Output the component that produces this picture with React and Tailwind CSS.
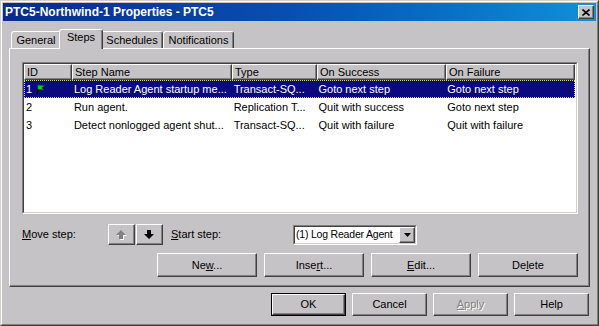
import React from 'react';

/**
 * Job properties dialog – Steps tab
 */
const COLUMNS = [
  { label: 'ID', w: 'w-[48px]' },
  { label: 'Step Name', w: 'w-[160px]' },
  { label: 'Type', w: 'w-[85px]' },
  { label: 'On Success', w: 'w-[129px]' },
  { label: 'On Failure', w: 'w-[129px]' },
];

const STEPS = [
  ['1', 'Log Reader Agent startup me...', 'Transact-SQ...', 'Goto next step', 'Goto next step'],
  ['2', 'Run agent.', 'Replication T...', 'Quit with success', 'Goto next step'],
  ['3', 'Detect nonlogged agent shut...', 'Transact-SQ...', 'Quit with failure', 'Quit with failure'],
];

function Bevel({ children, className = '' }) {
  return (
    <div
      className={`flex items-center justify-center border border-t-white border-l-white border-r-[#404040] border-b-[#404040] shadow-[inset_-1px_-1px_0_#808080] bg-[#c6c3c6] ${className}`}
    >
      {children}
    </div>
  );
}

function Button({ children, w = 'w-[100px]', h = 'h-[24px]', isDefault, disabled }) {
  const label = (
    <span className={disabled ? 'text-[#808080] [text-shadow:1px_1px_0_#fff]' : 'text-black'}>
      {children}
    </span>
  );
  if (isDefault) {
    return (
      <div className={`${w} ${h} border border-black`}>
        <Bevel className="h-full w-full">{label}</Bevel>
      </div>
    );
  }
  return <Bevel className={`${w} ${h}`}>{label}</Bevel>;
}

function Flag() {
  return (
    <svg width="12" height="11" viewBox="0 0 12 11" className="ml-[2px]">
      <path d="M2.5 10.5 L5.5 3" stroke="#000" strokeWidth="1.3" />
      <path d="M3.5 1 L11 1.5 L8 3.5 L9.5 6 L4 5.5 Z" fill="#10d010" stroke="#005000" strokeWidth="0.7" />
    </svg>
  );
}

function Arrow({ up, disabled }) {
  const pts = up ? '5,1 10,6 7,6 7,10 3,10 3,6 0,6' : '5,10 10,5 7,5 7,1 3,1 3,5 0,5';
  return (
    <svg width="11" height="11" viewBox="0 0 11 11">
      {disabled && <polygon points={pts} fill="#fff" transform="translate(1 1)" />}
      <polygon points={pts} fill={disabled ? '#808080' : '#000'} />
    </svg>
  );
}

function Tab({ label, w, selected }) {
  return (
    <div
      className={`flex items-center justify-center rounded-t-[3px] border-t border-l border-t-white border-l-white border-r border-r-[#404040] shadow-[inset_-1px_0_0_#808080] bg-[#c6c3c6] ${w} ${
        selected ? 'relative z-10 -mx-[2px] h-[20px] pb-[4px]' : 'mb-[1px] h-[17px] pt-px'
      }`}
    >
      {label}
    </div>
  );
}

export default function App() {
  return (
    <div className="h-[326px] w-[599px] overflow-hidden text-[11px] leading-none text-black [font-family:'Liberation_Sans',Arial,sans-serif]">
      {/* Window frame */}
      <div className="h-full w-full border border-t-[#d4d0c8] border-l-[#d4d0c8] border-r-[#404040] border-b-[#404040] bg-[#c6c3c6]">
        <div className="flex h-full w-full flex-col border border-t-white border-l-white border-r-[#808080] border-b-[#808080] p-px">
          {/* Title bar */}
          <div className="flex h-[18px] items-center justify-between bg-linear-to-r from-[#0a2a8c] via-[#0850b4] to-[#1290d8] pl-[2px] pr-[2px]">
            <span className="text-[12px] font-bold text-white">PTC5-Northwind-1 Properties - PTC5</span>
            <Bevel className="h-[14px] w-[16px]">
              <svg width="8" height="7" viewBox="0 0 8 7">
                <path d="M0.5 0.5 L7.5 6.5 M7.5 0.5 L0.5 6.5" stroke="#000" strokeWidth="1.6" />
              </svg>
            </Bevel>
          </div>

          {/* Tabs */}
          <div className="mt-[8px] flex h-[20px] items-end px-[8px] -mb-px">
            <Tab label="General" w="w-[50px]" />
            <Tab label="Steps" w="w-[44px]" selected />
            <Tab label="Schedules" w="w-[62px]" />
            <Tab label="Notifications" w="w-[71px]" />
          </div>

          {/* Tab panel */}
          <div className="mx-[6px] h-[239px] border border-t-white border-l-white border-r-[#404040] border-b-[#404040] shadow-[inset_-1px_-1px_0_#808080] pl-[12px] pt-[13px]">
            {/* List view */}
            <div className="h-[152px] w-[556px] border border-t-[#808080] border-l-[#808080] border-r-white border-b-white">
              <div className="h-full w-full border border-t-[#404040] border-l-[#404040] border-r-[#d4d0c8] border-b-[#d4d0c8] bg-white">
                <div className="flex h-[16px]">
                  {COLUMNS.map((c) => (
                    <div
                      key={c.label}
                      className={`${c.w} flex items-center border border-t-white border-l-white border-r-[#404040] border-b-[#404040] shadow-[inset_-1px_-1px_0_#808080] bg-[#c6c3c6] pl-[2px]`}
                    >
                      {c.label}
                    </div>
                  ))}
                </div>
                {STEPS.map((row, i) => (
                  <div
                    key={row[0]}
                    className={`flex h-[18px] w-[551px] items-center ${
                      i === 0 ? 'border border-dotted border-[#e8e800] bg-[#0a0a80] text-white' : 'border border-transparent'
                    }`}
                  >
                    {row.map((cell, j) => (
                      <div
                        key={j}
                        className={`${COLUMNS[j].w} flex items-center overflow-hidden whitespace-nowrap pl-[2px] ${j === 0 ? '-ml-px' : ''}`}
                      >
                        {cell}
                        {j === 0 && i === 0 && <Flag />}
                      </div>
                    ))}
                  </div>
                ))}
              </div>
            </div>

            {/* Move / start step */}
            <div className="mt-[10px] flex h-[21px] items-center">
              <span className="w-[86px]">
                <u>M</u>ove step:
              </span>
              <div className="flex gap-px">
                <Bevel className="h-[21px] w-[27px]">
                  <Arrow up disabled />
                </Bevel>
                <Bevel className="h-[21px] w-[27px]">
                  <Arrow />
                </Bevel>
              </div>
              <span className="ml-[8px] w-[122px]">
                <u>S</u>tart step:
              </span>
              <div className="h-[20px] w-[124px] border border-t-[#808080] border-l-[#808080] border-r-white border-b-white">
                <div className="flex h-full w-full items-center border border-t-[#404040] border-l-[#404040] border-r-[#d4d0c8] border-b-[#d4d0c8] bg-white">
                  <span className="flex-1 overflow-hidden whitespace-nowrap pl-[1px] text-[10.5px] tracking-[-0.2px]">
                    (1) Log Reader Agent
                  </span>
                  <Bevel className="h-full w-[16px] shrink-0">
                    <svg width="7" height="4" viewBox="0 0 7 4">
                      <polygon points="0,0 7,0 3.5,4" fill="#000" />
                    </svg>
                  </Bevel>
                </div>
              </div>
            </div>

            {/* Step actions */}
            <div className="mt-[8px] flex gap-[7px] pl-[135px]">
              <Button>
                Ne<u>w</u>...
              </Button>
              <Button>
                Inse<u>r</u>t...
              </Button>
              <Button>
                <u>E</u>dit...
              </Button>
              <Button>
                De<u>l</u>ete
              </Button>
            </div>
          </div>

          {/* Dialog buttons */}
          <div className="mt-[6px] flex justify-end gap-[6px] pr-[7px]">
            <Button w="w-[75px]" h="h-[23px]" isDefault>
              OK
            </Button>
            <Button w="w-[75px]" h="h-[23px]">
              Cancel
            </Button>
            <Button w="w-[75px]" h="h-[23px]" disabled>
              <u>A</u>pply
            </Button>
            <Button w="w-[75px]" h="h-[23px]">
              Help
            </Button>
          </div>
        </div>
      </div>
    </div>
  );
}
